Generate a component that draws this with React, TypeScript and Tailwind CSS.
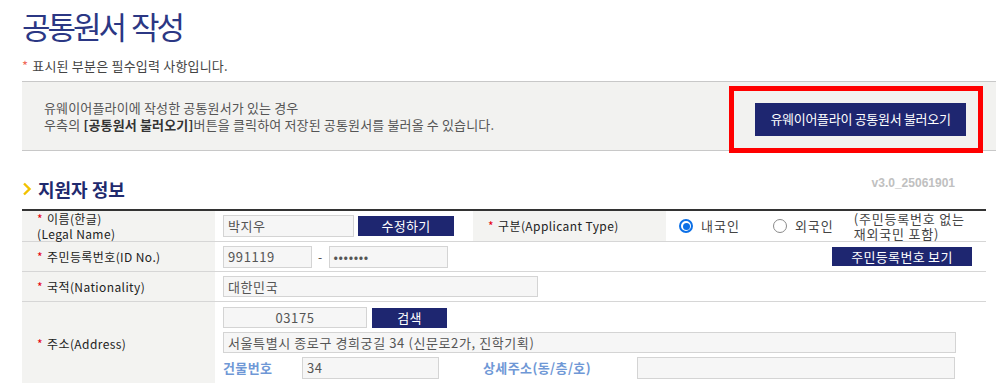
import React from "react";

const F = { fontFamily: '"Noto Sans CJK KR", "Noto Sans", sans-serif' };

function Req() {
  return <span className="text-[#e60012] mr-[4px]">*</span>;
}

function Input({ w, h = 22, value, center = false }: { w: number; h?: number; value?: string; center?: boolean }) {
  return (
    <div
      className={`flex items-center border border-[#d4d4d4] bg-[#f6f6f6] px-[4px] text-[13px] tracking-[0.6px] text-[#555] ${center ? "justify-center" : ""}`}
      style={{ width: w, height: h }}
    >
      {value}
    </div>
  );
}

function Btn({ w, h = 20, children }: { w: number; h?: number; children: React.ReactNode }) {
  return (
    <div
      className="flex items-center justify-center bg-[#1e2670] text-[13px] tracking-[0.3px] text-white"
      style={{ width: w, height: h }}
    >
      {children}
    </div>
  );
}

function Radio({ checked }: { checked: boolean }) {
  return checked ? (
    <div className="flex h-[14px] w-[14px] items-center justify-center rounded-full border-[2px] border-[#0b6fe6] bg-white">
      <div className="h-[7px] w-[7px] rounded-full bg-[#0b6fe6]" />
    </div>
  ) : (
    <div className="h-[14px] w-[14px] rounded-full border border-[#8a8a8a] bg-white" />
  );
}

export default function App() {
  return (
    <div className="w-[996px] h-[383px] overflow-hidden bg-white pl-[22px]" style={F}>
      {/* title */}
      <div className="flex h-[52px] items-start pt-[6px] text-[31px] leading-[40px] tracking-[-3px] text-[#2b3784]">
        <span>공통원서</span>
        <span className="ml-[7px]">작성</span>
      </div>
      <div className="flex h-[28px] items-center text-[13px] tracking-[0.2px] text-[#444]">
        <span className="mr-[4px] text-[#f06a5a]">*</span>표시된 부분은 필수입력 사항입니다.
      </div>

      {/* info box */}
      <div className="mt-[1px] flex h-[70px] items-center justify-between border-y border-[#c8c8c8] bg-[#f2f2f0] pl-[22px] pr-[30px]">
        <div className="text-[13px] leading-[17px] tracking-[0.15px] text-[#555]">
          <div>유웨이어플라이에 작성한 공통원서가 있는 경우</div>
          <div>
            우측의 <b className="text-[#333]">[공통원서 불러오기]</b>버튼을 클릭하여 저장된 공통원서를 불러올 수 있습니다.
          </div>
        </div>
        <div className="relative mt-[6px]">
          <div className="flex h-[33px] w-[211px] items-center justify-center bg-[#1e2670] text-[13px] tracking-[-0.3px] text-white">
            유웨이어플라이 공통원서 불러오기
          </div>
          <div className="pointer-events-none absolute -left-[26px] -right-[17px] -top-[17px] -bottom-[17px] border-[5px] border-[#ff0000]" />
        </div>
      </div>

      {/* heading */}
      <div className="flex h-[58px] w-[964px] items-start justify-between">
        <div className="mt-[26px] flex items-center leading-[24px]">
          <svg width="10" height="14" viewBox="0 0 10 14" className="mr-[6px]">
            <path d="M2 1.5 L7.5 7 L2 12.5" fill="none" stroke="#f2c200" strokeWidth="2.4" />
          </svg>
          <span className="text-[18px] font-bold text-[#1f2a6e]">지원자 정보</span>
        </div>
        <div
          className="mr-[31px] mt-[24px] text-[12px] font-bold leading-[16px] text-[#c0c0c0]"
          style={{ fontFamily: '"Liberation Sans", Arial, sans-serif' }}
        >
          v3.0_25061901
        </div>
      </div>

      {/* table */}
      <div className="w-[964px] border-t-[2px] border-[#333] text-[12px] tracking-[0.4px] text-[#222]">
        {/* row 1 */}
        <div className="flex h-[31px] border-b border-[#d6d6d6]">
          <div className="flex w-[193px] flex-col justify-center bg-[#f3f3f1] pl-[15px] leading-[15px]">
            <div>
              <Req />이름(한글)
            </div>
            <div>(Legal Name)</div>
          </div>
          <div className="flex w-[258px] items-center gap-[4px] pl-[8px]">
            <Input w={131} value="박지우" />
            <Btn w={96}>수정하기</Btn>
          </div>
          <div className="flex w-[193px] items-center bg-[#f3f3f1] pl-[15px]">
            <Req />구분(Applicant Type)
          </div>
          <div className="flex flex-1 items-center pl-[13px]">
            <Radio checked />
            <span className="ml-[8px] text-[13px] tracking-[1px] text-[#444]">내국인</span>
            <span className="ml-[33px]">
              <Radio checked={false} />
            </span>
            <span className="ml-[8px] text-[13px] tracking-[1px] text-[#444]">외국인</span>
            <div className="ml-[20px] text-[13px] leading-[15px] tracking-[0.8px] text-[#444]">
              <div>(주민등록번호 없는</div>
              <div>재외국민 포함)</div>
            </div>
          </div>
        </div>

        {/* row 2 */}
        <div className="flex h-[30px] border-b border-[#d6d6d6]">
          <div className="flex w-[193px] items-center bg-[#f3f3f1] pl-[15px]">
            <Req />주민등록번호(ID No.)
          </div>
          <div className="flex flex-1 items-center pl-[8px] pr-[14px]">
            <Input w={89} value="991119" />
            <span className="mx-[6px] text-[#444]">-</span>
            <Input w={119} value="•••••••" />
            <div className="ml-auto">
              <Btn w={140} h={19}>
                주민등록번호 보기
              </Btn>
            </div>
          </div>
        </div>

        {/* row 3 */}
        <div className="flex h-[30px] border-b border-[#d6d6d6]">
          <div className="flex w-[193px] items-center bg-[#f3f3f1] pl-[15px]">
            <Req />국적(Nationality)
          </div>
          <div className="flex flex-1 items-center pl-[8px]">
            <Input w={315} h={21} value="대한민국" />
          </div>
        </div>

        {/* row 4 */}
        <div className="flex h-[84px]">
          <div className="flex w-[193px] items-center bg-[#f3f3f1] pl-[15px]">
            <Req />주소(Address)
          </div>
          <div className="flex flex-1 flex-col gap-[4px] pl-[8px] pt-[5px]">
            <div className="flex items-center gap-[5px]">
              <Input w={144} h={21} value="03175" center />
              <Btn w={75}>검색</Btn>
            </div>
            <Input w={733} h={21} value="서울특별시 종로구 경희궁길 34 (신문로2가, 진학기획)" />
            <div className="flex items-center">
              <span className="w-[79px] text-[13px] font-bold text-[#6f98d6]">건물번호</span>
              <Input w={137} value="34" />
              <span className="ml-[44px] w-[154px] text-[13px] font-bold text-[#6f98d6]">상세주소(동/층/호)</span>
              <Input w={318} />
            </div>
          </div>
        </div>
      </div>
    </div>
  );
}
